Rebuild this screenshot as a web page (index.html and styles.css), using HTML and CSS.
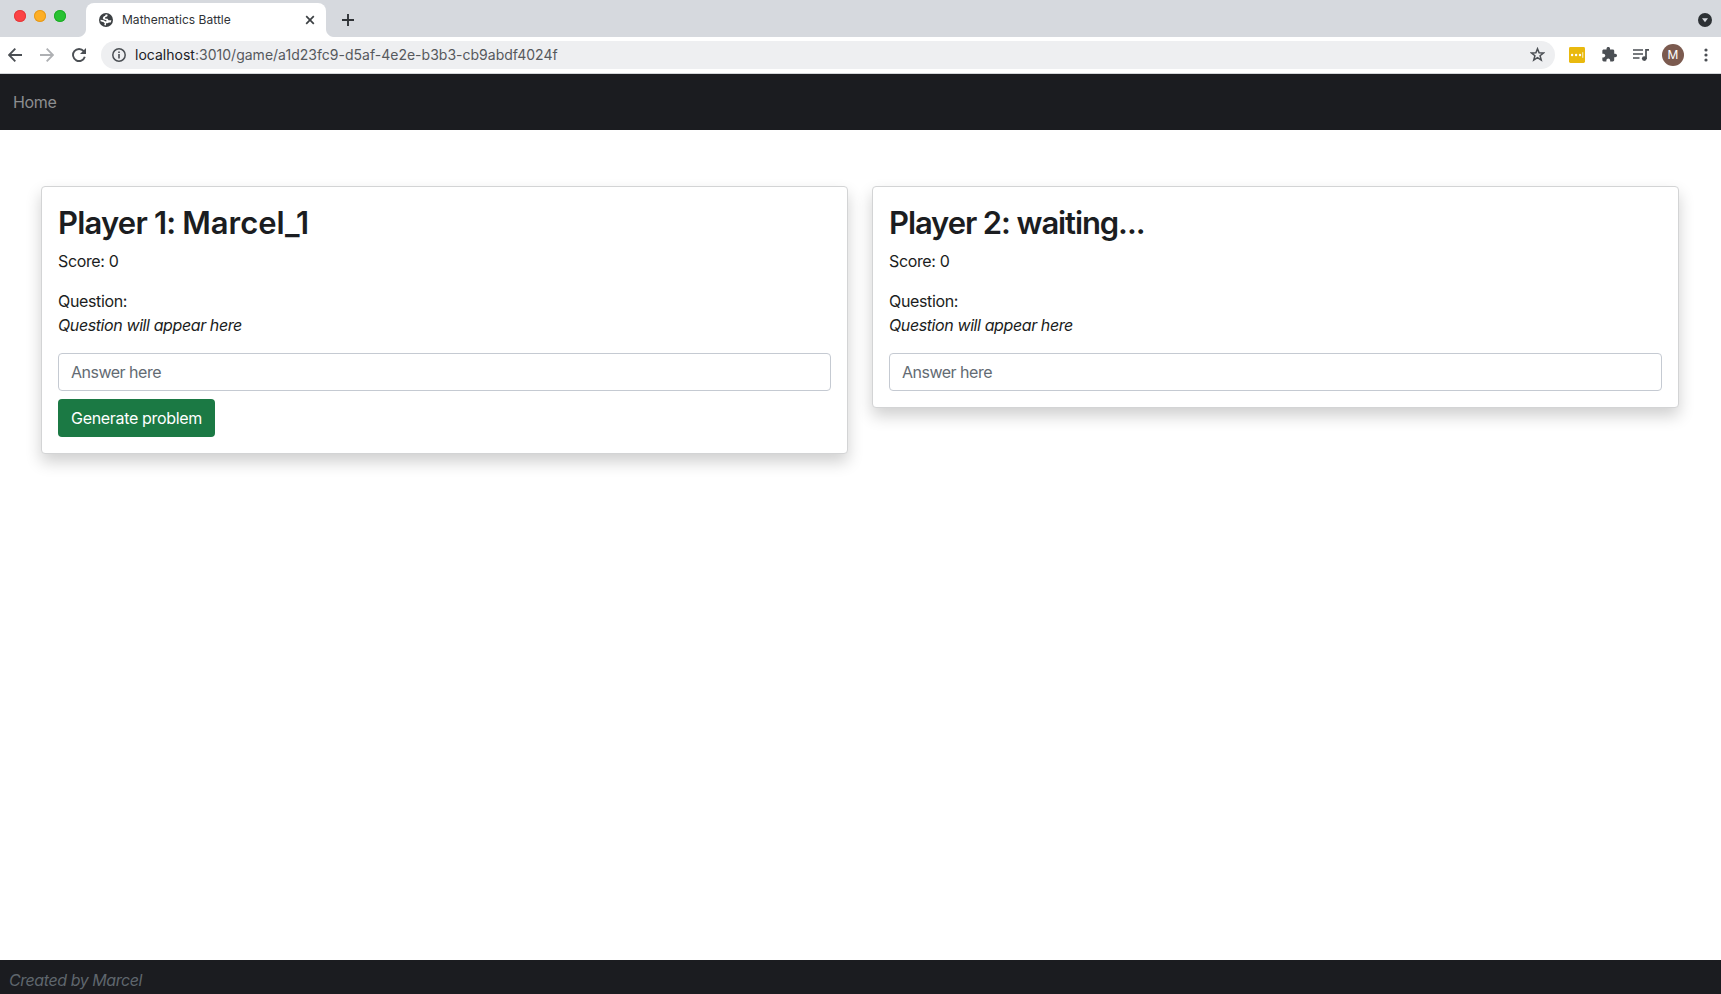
FILE: index.html
```
<!DOCTYPE html>
<html lang="en">
<head>
<meta charset="utf-8">
<title>Mathematics Battle</title>
<link rel="stylesheet" href="styles.css">
</head>
<body>
<div class="window">
  <div class="tabstrip">
    <div class="lights"><i class="light red"></i><i class="light amber"></i><i class="light green"></i></div>
    <div class="tab">
      <svg class="globe" viewBox="0 0 14 14"><circle cx="7" cy="7" r="7" fill="#3c4043"/><path d="M8.300 1.600 8.600 2.900 7.600 3.800 6.300 4 6 5.400 8.600 5.800 9.500 7.300 12.400 7.300 11.700 9.600 9.900 9.500 8.600 10.200 7.300 10 6.800 12.400 5.200 12.100 5.800 10.600 4.700 9.200 1.600 8.300 1.500 6.800 4.600 7.200 6.800 8.600 7.800 8 6.800 7 4.600 6.600 3.700 5.200 4.600 3.400 6.200 2.800 6.600 1.600Z" fill="#fff"/></svg>
      <span class="tab-title">Mathematics Battle</span>
      <svg class="close" viewBox="0 0 10 10"><path d="M1.2 1.2 8.8 8.8M8.8 1.2 1.2 8.8" stroke="#3c4043" stroke-width="1.7"/></svg>
    </div>
    <svg class="plus" viewBox="0 0 12 12"><path d="M6 0V12M0 6H12" stroke="#303337" stroke-width="1.9"/></svg>
    <svg class="tab-search" viewBox="0 0 14 14"><circle cx="7" cy="7" r="7" fill="#2d3135"/><path d="M4 5.2H10L7 9.3Z" fill="#d6d9de"/></svg>
  </div>
  <div class="toolbar">
    <svg class="nav-icon back" viewBox="0 0 14 14"><path d="M14 7H1.4M7.3.7 1 7 7.3 13.3" fill="none" stroke="#4b4f54" stroke-width="1.9"/></svg>
    <svg class="nav-icon forward" viewBox="0 0 14 14"><path d="M0 7H12.6M6.7.7 13 7 6.7 13.3" fill="none" stroke="#aeb0b3" stroke-width="1.9"/></svg>
    <svg class="nav-icon reload" viewBox="0 0 14 14"><path d="M11.7 3.2A6 6 0 1 0 12.8 8.7" fill="none" stroke="#4b4f54" stroke-width="1.9"/><path d="M14 0V6H8Z" fill="#4b4f54"/></svg>
    <div class="address">
      <svg class="info" viewBox="0 0 14 14"><circle cx="7" cy="7" r="6.2" fill="none" stroke="#4b4f54" stroke-width="1.5"/><path d="M7 6V10.5M7 3.5V5" stroke="#4b4f54" stroke-width="1.6"/></svg>
      <span class="url"><span class="host">localhost</span><span class="path">:3010/game/a1d23fc9-d5af-4e2e-b3b3-cb9abdf4024f</span></span>
      <svg class="star" viewBox="0 0 14 14"><path d="M7 1.6 8.5 5.3 12.6 5.6 9.4 8.2 10.5 12.2 7 10 3.5 12.2 4.6 8.2 1.4 5.6 5.5 5.3Z" fill="none" stroke="#4b4f54" stroke-width="1.4"/></svg>
    </div>
    <svg class="ext" viewBox="0 0 16 16"><rect width="16" height="16" rx="1.4" fill="#e9b90e"/><g fill="#fff"><circle cx="3.1" cy="8" r="1.2"/><circle cx="7.1" cy="8" r="1.2"/><circle cx="11" cy="8" r="1.2"/><rect x="13.4" y="5.2" width=".8" height="5.6"/></g></svg>
    <svg class="puzzle" viewBox="1.5 1.5 21.5 21"><path d="M20.5 11H19V7c0-1.1-.9-2-2-2h-4V3.5C13 2.12 11.88 1 10.5 1S8 2.12 8 3.5V5H4c-1.1 0-1.99.9-1.99 2v3.8H3.5c1.49 0 2.7 1.21 2.7 2.7s-1.21 2.7-2.7 2.7H2V20c0 1.1.9 2 2 2h3.8v-1.5c0-1.49 1.21-2.7 2.7-2.7 1.49 0 2.7 1.21 2.7 2.7V22H17c1.1 0 2-.9 2-2v-4h1.5c1.38 0 2.5-1.12 2.5-2.5S21.88 11 20.5 11z" fill="#4b4f54"/></svg>
    <svg class="media" viewBox="0 0 16 12"><path d="M0 1H10M0 5H10M0 9H6.5" stroke="#4b4f54" stroke-width="1.7"/><path d="M13 10V.9H16" fill="none" stroke="#4b4f54" stroke-width="1.7"/><circle cx="11.3" cy="9.6" r="2.4" fill="#4b4f54"/></svg>
    <span class="avatar">M</span>
    <svg class="dots" viewBox="0 0 4 14"><g fill="#4b4f54"><circle cx="2" cy="2" r="1.6"/><circle cx="2" cy="7" r="1.6"/><circle cx="2" cy="12" r="1.6"/></g></svg>
  </div>
  <nav class="navbar"><a class="nav-link">Home</a></nav>
  <main class="board">
    <section class="card">
      <h2 class="player">Player 1: <span class="name">Marcel_1</span></h2>
      <p class="text score">Score: 0</p>
      <p class="text"><span class="label">Question:</span><br><em class="question">Question will appear here</em></p>
      <input class="answer" placeholder="Answer here">
      <button class="generate">Generate problem</button>
    </section>
    <section class="card">
      <h2 class="player waiting">Player 2: waiting...</h2>
      <p class="text score">Score: 0</p>
      <p class="text"><span class="label">Question:</span><br><em class="question">Question will appear here</em></p>
      <input class="answer" placeholder="Answer here">
    </section>
  </main>
  <footer class="footer"><em class="credit">Created by Marcel</em></footer>
</div>
</body>
</html>
```
FILE: styles.css
```
* { box-sizing: border-box; }
body { margin: 0; background: #fff; color: #1b1d21; font: 430 16px/24px Inter, "Liberation Sans", sans-serif; letter-spacing: -0.35px; }
svg { display: block; flex: none; }
.window { display: flex; flex-direction: column; height: 994px; overflow: hidden; }

.tabstrip { display: flex; flex: none; height: 37px; background: #d6d9de; padding: 3px 9px 0 14px; }
.lights { display: flex; gap: 8px; padding-top: 7px; width: 72px; }
.light { width: 12px; height: 12px; border-radius: 50%; }
.red { background: #fc4245; box-shadow: inset 0 0 0 1px #e33b3d; }
.amber { background: #fdae25; box-shadow: inset 0 0 0 1px #e39a1e; }
.green { background: #28c232; box-shadow: inset 0 0 0 1px #1eac28; }
.tab { position: relative; display: flex; align-items: center; width: 240px; height: 34px; padding: 0 11px 0 13px; background: #fff; border-radius: 8px 8px 0 0; }
.tab::before, .tab::after { content: ""; position: absolute; bottom: 0; width: 8px; height: 8px; }
.tab::before { left: -8px; background: radial-gradient(circle at 0 0, transparent 7.5px, #fff 8.5px); }
.tab::after { right: -8px; background: radial-gradient(circle at 100% 0, transparent 7.5px, #fff 8.5px); }
.globe { width: 14px; height: 14px; }
.tab-title { margin-left: 9px; font-size: 12px; letter-spacing: 0.03px; color: #303337; white-space: nowrap; }
.close { width: 10px; height: 10px; margin-left: auto; }
.plus { width: 12px; height: 12px; margin: 11px 0 0 16px; }
.tab-search { width: 14px; height: 14px; margin: 10px 0 0 auto; }

.toolbar { display: flex; flex: none; align-items: center; height: 37px; padding: 0 13.5px 1px 8px; background: #fff; border-bottom: 1px solid #d4d6d9; }
.nav-icon { width: 14px; height: 14px; }
.forward, .reload { margin-left: 18px; }
.address { display: flex; align-items: center; width: 1454px; height: 28px; margin-left: 15px; padding: 0 10px 0 11px; border-radius: 14px; background: #eeeff1; }
.info { width: 14px; height: 14px; }
.url { margin-left: 9px; font-size: 14px; letter-spacing: 0.015px; white-space: nowrap; }
.host { color: #202124; }
.path { color: #56595d; }
.star { width: 15px; height: 15px; margin-left: auto; }
.ext { width: 16px; height: 16px; margin-left: 14px; }
.puzzle { width: 15px; height: 15px; margin-left: 16.5px; }
.media { width: 16px; height: 12px; margin-left: 16.5px; }
.avatar { width: 22px; height: 22px; margin-left: 13px; border-radius: 50%; background: #7b5a4f; color: #fff; font-size: 12px; line-height: 22px; text-align: center; letter-spacing: 0; }
.dots { width: 4px; height: 14px; margin-left: auto; }

.navbar { display: flex; flex: none; align-items: center; height: 56px; padding: 0 13px; background: #1b1c20; }
.nav-link { color: #8d8e90; }
.board { display: grid; grid-template-columns: 807px 807px; column-gap: 24px; align-items: start; align-content: start; flex: 1; padding: 56px 42px 0 41px; }
.card { padding: 16px; border: 1px solid #d3d4d5; border-radius: 4px; background: #fff; box-shadow: 0 8px 16px rgba(0, 0, 0, .19); }
.player { margin: 0 0 7px; padding-top: 1px; font-size: 31px; line-height: 38.4px; font-weight: 580; letter-spacing: -0.8px; }
.name { letter-spacing: -0.05px; }
.waiting { letter-spacing: -1.1px; }
.text { margin: 0 0 16px; }
.question { letter-spacing: -0.4px; }
.answer { display: block; width: 100%; height: 38px; padding: 6px 12px; border: 1px solid #c5cad2; border-radius: 4px; background: #fff; font: inherit; letter-spacing: -0.5px; color: inherit; }
.answer::placeholder { color: #636b73; opacity: 1; }
.generate { display: block; height: 38px; margin-top: 8px; padding: 0; width: 157px; border: 0; border-radius: 4px; background: #1b7944; color: #fff; font: inherit; letter-spacing: -0.33px; }
.footer { flex: none; height: 34px; padding: 8px 9px 0; background: #1b1c20; color: #5f666d; }
.credit { letter-spacing: -0.43px; }
```
